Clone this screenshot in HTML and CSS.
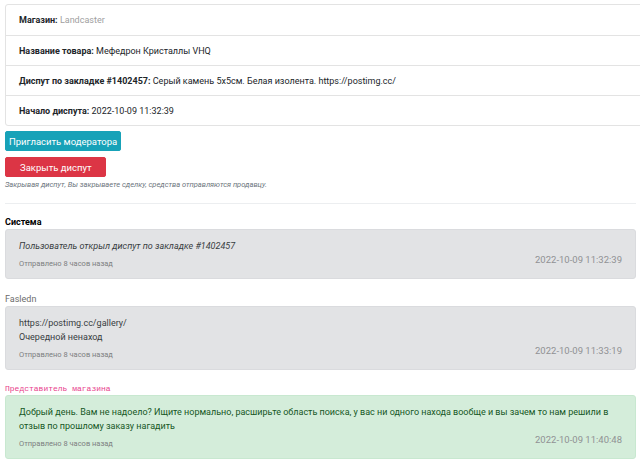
FILE: index.html
```html
<!DOCTYPE html>
<html lang="ru">
<head>
    <meta charset="UTF-8">
    <title>Диспут #1402457</title>
    <link rel="stylesheet" href="styles.css">
</head>
<body>
    <ul class="info-list">
        <li><b>Магазин:</b> <span class="muted">Landcaster</span></li>
        <li><b>Название товара:</b> Мефедрон Кристаллы VHQ</li>
        <li><b>Диспут по закладке #1402457:</b> Серый камень 5x5см. Белая изолента. https://postimg.cc/</li>
        <li><b>Начало диспута:</b> 2022-10-09 11:32:39</li>
    </ul>

    <div class="actions">
        <button class="btn btn-info">Пригласить модератора</button>
        <button class="btn btn-danger">Закрыть диспут</button>
        <p class="hint">Закрывая диспут, Вы закрываете сделку, средства отправляются продавцу.</p>
    </div>

    <hr>

    <div class="message first">
        <div class="author author-system">Система</div>
        <div class="bubble bubble-gray">
            <p><i>Пользователь открыл диспут по закладке #1402457</i></p>
            <div class="meta">
                <span class="ago">Отправлено 8 часов назад</span>
                <span class="date">2022-10-09 11:32:39</span>
            </div>
        </div>
    </div>

    <div class="message">
        <div class="author author-user">Fasledn</div>
        <div class="bubble bubble-gray">
            <p>https://postimg.cc/gallery/<br>Очередной ненаход</p>
            <div class="meta">
                <span class="ago">Отправлено 8 часов назад</span>
                <span class="date">2022-10-09 11:33:19</span>
            </div>
        </div>
    </div>

    <div class="message">
        <div class="author author-shop">Представитель магазина</div>
        <div class="bubble bubble-green">
            <p>Добрый день. Вам не надоело? Ищите нормально, расширьте область поиска, у вас ни одного находа вообще и вы зачем то нам решили в отзыв по прошлому заказу нагадить</p>
            <div class="meta">
                <span class="ago">Отправлено 8 часов назад</span>
                <span class="date">2022-10-09 11:40:48</span>
            </div>
        </div>
    </div>
</body>
</html>
```

FILE: styles.css
```css
body {
    font-family: 'Roboto', 'Noto Sans', sans-serif;
    font-size: 9px;
    color: #212529;
    margin: 0;
    padding: 4px 4px 0 5px;
    overflow: hidden;
    background: #fff;
}
b {
    font-weight: bold;
}
.muted {
    color: #a0a0a0;
}
.info-list {
    list-style: none;
    margin: 0 -12px 0 0;
    padding: 0;
    border: 1px solid #e3e3e3;
    border-radius: 3px;
}
.info-list li {
    height: 29px;
    line-height: 30px;
    padding: 0 13px;
    border-top: 1px solid #e3e3e3;
}
.info-list li:first-child {
    height: 30px;
    border-top: none;
}
.actions {
    margin-top: 5px;
}
.btn {
    display: block;
    font-family: inherit;
    font-size: 9.5px;
    color: #fff;
    border: 1px solid transparent;
    border-radius: 2px;
    height: 20px;
    padding: 0 3px;
    cursor: pointer;
}
.btn-info {
    background-color: #17a2b8;
    border-color: #17a2b8;
}
.btn-danger {
    margin-top: 6px;
    padding: 0 14px;
    background-color: #dc3545;
    border-color: #dc3545;
}
.hint {
    margin: 3px 0 0;
    font-size: 7.5px;
    font-style: italic;
    color: #6c757d;
}
hr {
    margin: 14px 0 0;
    border: 0;
    border-top: 1px solid #eceef0;
}
.message {
    margin-top: 13px;
}
.message.first {
    margin-top: 11px;
}
.author {
    line-height: 14px;
}
.author-system {
    font-weight: bold;
    color: #000;
}
.author-user {
    color: #6c6c6c;
}
.author-shop {
    font-family: 'Liberation Mono', monospace;
    font-size: 8px;
    line-height: 12px;
    color: #e83e8c;
}
.bubble {
    border-radius: 3px;
    padding: 9px 13px 8px 13px;
}
.bubble p {
    margin: 0;
    line-height: 14px;
}
.bubble-gray {
    background-color: #e2e3e5;
    border: 1px solid #dadbde;
    color: #383d41;
}
.bubble-green {
    background-color: #d4edda;
    border: 1px solid #c8e8d0;
    color: #155724;
}
.meta {
    display: flex;
    justify-content: space-between;
    align-items: flex-end;
    margin-top: 5px;
    color: #7d7e80;
}
.ago {
    font-size: 7.5px;
    line-height: 12px;
}
.date {
    font-size: 9.5px;
    line-height: 11px;
    margin: -4px 0 5px;
    color: #909194;
}
```
